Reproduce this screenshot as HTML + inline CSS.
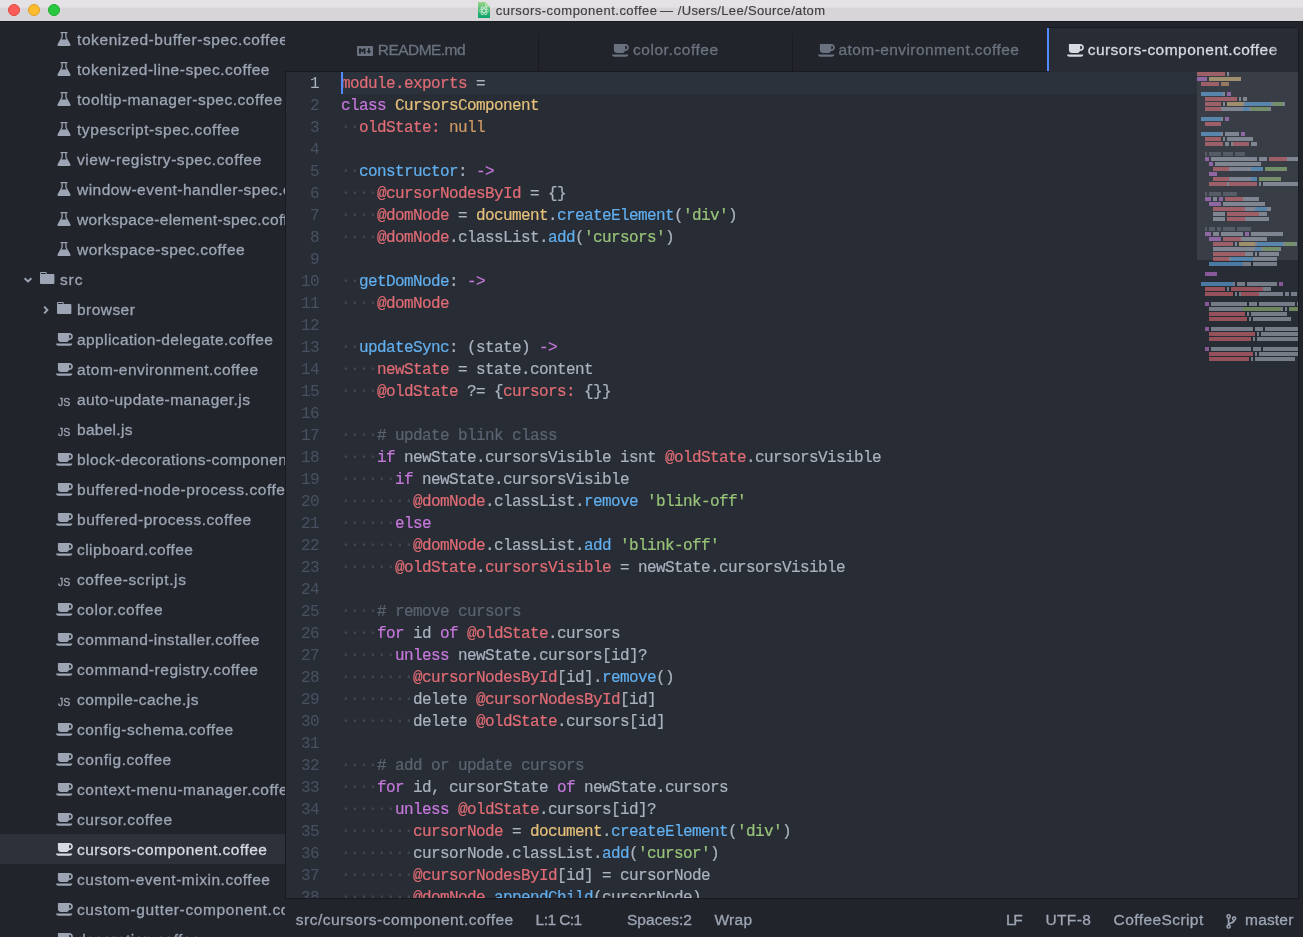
<!DOCTYPE html>
<html><head><meta charset="utf-8"><title>cursors-component.coffee</title>
<style>
*{box-sizing:border-box}
html,body{margin:0;padding:0}
html{width:1303px;height:937px;overflow:hidden}
.tree,.tabs,.ed,.sb,.title{will-change:transform}
body{width:1303px;height:937px;overflow:hidden;background:#21252b;position:relative;font-family:"Liberation Sans",sans-serif;color:#9da5b4;font-size:15.5px;letter-spacing:.48px;-webkit-text-stroke:.3px}
.title{position:absolute;left:0;top:0;width:1303px;height:21px;background:linear-gradient(#e4e2e4 0,#e4e2e4 7px,#d7d5d7 8.5px,#d7d5d7 100%)}
.tline{position:absolute;left:0;top:21px;width:1303px;height:1px;background:#181a1f}
.title .dot{position:absolute;top:4px;width:12px;height:12px;border-radius:50%}
.title .lb{position:absolute;top:0;height:21px;line-height:21px;color:#403e40;white-space:pre;-webkit-text-stroke:.15px}
.title .fi{position:absolute;left:478px;top:2px}
.tree{position:absolute;left:0;top:22px;width:285px;height:915px;overflow:hidden}
.row{position:absolute;left:0;width:285px;height:30px;line-height:32px;white-space:pre;margin-top:-22px}
.row.sel{background:#2c313a;color:#d7dae0}
.ic{position:absolute;fill:currentColor;overflow:visible}
.nm{position:absolute;top:0}
.js{-webkit-text-stroke:.3px;position:absolute;font-size:10.5px;letter-spacing:0;line-height:30px;transform:translateY(3px)}
.tabs{z-index:2;position:absolute;left:286px;top:28px;width:1012px;height:44px;border-bottom:1px solid #181a1f}
.tab{position:absolute;top:0;height:43px;width:253px;line-height:43px;white-space:pre;color:#6b727f}
.tab .sep{position:absolute;left:0;top:0;width:1px;height:43px;background:linear-gradient(rgba(24,26,31,0),#181a1f 14px)}
.tab.act{background:#282c34;color:#d7dae0;height:44px;border-left:2px solid #282c34;border-top-right-radius:3px;box-shadow:0 -1px 0 #181a1f, 1px 0 0 #181a1f}
.tab .lb{position:absolute;top:0}
.tab.act:before{content:'';position:absolute;left:-2px;top:0;width:2px;height:43px;background:#528bff}
.ed{position:absolute;left:286px;top:72px;width:1012px;height:826px;background:#282c34;overflow:hidden;box-shadow:0 0 0 1px #181a1f;font-family:"Liberation Mono",monospace;font-size:16px;letter-spacing:-0.6016px;-webkit-text-stroke:.2px;color:#abb2bf}
.ln{height:22px;line-height:24px;white-space:pre;position:relative}
.ln.cur:before{content:"";position:absolute;left:55px;right:101px;top:0;height:22px;background:#2c323c}
.no{position:absolute;left:0;width:33px;text-align:right;color:#495062;-webkit-text-stroke:0}
.cur .no{color:#abb2bf}
.tx{position:absolute;left:55px}
.tx i{font-style:normal;font-weight:bold;color:#40454f;position:relative;top:-1px;-webkit-text-stroke:0}
.tx b{font-weight:normal}
.v{color:#e06c75}.k{color:#c678dd}.c{color:#e5c07b}.n{color:#d19a66}.f{color:#61afef}.s{color:#98c379}.m{color:#5c6370}
.caret{position:absolute;left:55px;top:0;width:2px;height:22px;background:#528bff}
.mmv{position:absolute;left:911px;top:0;width:101px;height:188px;background:rgba(235,240,255,.09)}
.mm{position:absolute;left:911px;top:0;opacity:.6}
.sb{overflow:hidden;position:absolute;left:286px;top:899px;width:1017px;height:38px;line-height:42px;white-space:pre}
.sb .lb{position:absolute;top:0}
.fade{position:absolute;right:0;top:0;width:28px;height:43px;background:linear-gradient(90deg,rgba(40,44,52,0),#282c34 70%)}
</style></head>
<body>
<div class="tree">
<div class="row" style="top:24px"><svg class="ic" style="left:57px;top:8px" width="14" height="14" viewBox="0 0 14 14"><path fill-rule="evenodd" d="M3.6 0h6.8v1.3H9.5v3.9l3.9 7c.5.9-.1 1.8-1.100 1.800H1.700c-1 0-1.600-.9-1.100-1.800l3.900-7V1.300H3.600zM5.700 1.300v4.200L4.500 7.600h5L8.300 5.500V1.300z"/></svg><span class="nm" style="left:77px;letter-spacing:0.584px">tokenized-buffer-spec.coffee</span></div>
<div class="row" style="top:54px"><svg class="ic" style="left:57px;top:8px" width="14" height="14" viewBox="0 0 14 14"><path fill-rule="evenodd" d="M3.6 0h6.8v1.3H9.5v3.9l3.9 7c.5.9-.1 1.8-1.100 1.800H1.700c-1 0-1.600-.9-1.100-1.800l3.900-7V1.300H3.600zM5.700 1.300v4.200L4.500 7.600h5L8.300 5.500V1.300z"/></svg><span class="nm" style="left:77px;letter-spacing:0.508px">tokenized-line-spec.coffee</span></div>
<div class="row" style="top:84px"><svg class="ic" style="left:57px;top:8px" width="14" height="14" viewBox="0 0 14 14"><path fill-rule="evenodd" d="M3.6 0h6.8v1.3H9.5v3.9l3.9 7c.5.9-.1 1.8-1.100 1.800H1.700c-1 0-1.600-.9-1.100-1.800l3.900-7V1.300H3.600zM5.700 1.300v4.200L4.500 7.600h5L8.300 5.500V1.300z"/></svg><span class="nm" style="left:77px;letter-spacing:0.506px">tooltip-manager-spec.coffee</span></div>
<div class="row" style="top:114px"><svg class="ic" style="left:57px;top:8px" width="14" height="14" viewBox="0 0 14 14"><path fill-rule="evenodd" d="M3.6 0h6.8v1.3H9.5v3.9l3.9 7c.5.9-.1 1.8-1.100 1.800H1.700c-1 0-1.600-.9-1.100-1.800l3.900-7V1.300H3.600zM5.700 1.300v4.200L4.500 7.600h5L8.300 5.500V1.300z"/></svg><span class="nm" style="left:77px;letter-spacing:0.567px">typescript-spec.coffee</span></div>
<div class="row" style="top:144px"><svg class="ic" style="left:57px;top:8px" width="14" height="14" viewBox="0 0 14 14"><path fill-rule="evenodd" d="M3.6 0h6.8v1.3H9.5v3.9l3.9 7c.5.9-.1 1.8-1.100 1.800H1.700c-1 0-1.600-.9-1.100-1.800l3.900-7V1.300H3.600zM5.700 1.300v4.200L4.500 7.600h5L8.300 5.500V1.300z"/></svg><span class="nm" style="left:77px;letter-spacing:0.552px">view-registry-spec.coffee</span></div>
<div class="row" style="top:174px"><svg class="ic" style="left:57px;top:8px" width="14" height="14" viewBox="0 0 14 14"><path fill-rule="evenodd" d="M3.6 0h6.8v1.3H9.5v3.9l3.9 7c.5.9-.1 1.8-1.100 1.800H1.700c-1 0-1.600-.9-1.100-1.800l3.900-7V1.300H3.600zM5.700 1.300v4.200L4.500 7.600h5L8.300 5.500V1.300z"/></svg><span class="nm" style="left:77px;letter-spacing:0.466px">window-event-handler-spec.coffee</span></div>
<div class="row" style="top:204px"><svg class="ic" style="left:57px;top:8px" width="14" height="14" viewBox="0 0 14 14"><path fill-rule="evenodd" d="M3.6 0h6.8v1.3H9.5v3.9l3.9 7c.5.9-.1 1.8-1.100 1.800H1.700c-1 0-1.600-.9-1.100-1.800l3.900-7V1.300H3.600zM5.700 1.300v4.200L4.500 7.600h5L8.300 5.500V1.300z"/></svg><span class="nm" style="left:77px;letter-spacing:0.359px">workspace-element-spec.coffee</span></div>
<div class="row" style="top:234px"><svg class="ic" style="left:57px;top:8px" width="14" height="14" viewBox="0 0 14 14"><path fill-rule="evenodd" d="M3.6 0h6.8v1.3H9.5v3.9l3.9 7c.5.9-.1 1.8-1.100 1.800H1.700c-1 0-1.600-.9-1.100-1.800l3.900-7V1.300H3.600zM5.700 1.300v4.200L4.500 7.600h5L8.300 5.500V1.300z"/></svg><span class="nm" style="left:77px;letter-spacing:0.468px">workspace-spec.coffee</span></div>
<div class="row" style="top:264px"><svg class="ic" style="left:24px;top:13px" width="8" height="6" viewBox="0 0 8 6"><path d="M.6 1.2L4 4.4l3.4-3.2" fill="none" stroke="currentColor" stroke-width="1.9"/></svg><svg class="ic" style="left:39.7px;top:8px" width="14.4" height="12" viewBox="0 0 15 12" preserveAspectRatio="none"><path fill-rule="evenodd" d="M0 .9C0 .4.4 0 .9 0h5.2c.5 0 .9.4.9.9V2h7.1c.5 0 .9.4.9.9v8.2c0 .5-.4.9-.9.9H.9c-.5 0-.9-.4-.9-.9zM1 1v1h5V1z"/></svg><span class="nm" style="left:60px;letter-spacing:0.869px">src</span></div>
<div class="row" style="top:294px"><svg class="ic" style="left:43px;top:12px" width="6" height="8" viewBox="0 0 6 8"><path d="M1.2.6L4.4 4 1.2 7.4" fill="none" stroke="currentColor" stroke-width="1.9"/></svg><svg class="ic" style="left:57px;top:8px" width="14.4" height="12" viewBox="0 0 15 12" preserveAspectRatio="none"><path fill-rule="evenodd" d="M0 .9C0 .4.4 0 .9 0h5.2c.5 0 .9.4.9.9V2h7.1c.5 0 .9.4.9.9v8.2c0 .5-.4.9-.9.9H.9c-.5 0-.9-.4-.9-.9zM1 1v1h5V1z"/></svg><span class="nm" style="left:77px;letter-spacing:0.445px">browser</span></div>
<div class="row" style="top:324px"><svg class="ic" style="left:55.9px;top:9.4px" width="17" height="12.7" viewBox="0 0 17 12.7"><path fill-rule="evenodd" d="M1.900 0h11.300c2.100 0 3.700 1.500 3.700 3.500s-1.600 3.500-3.700 3.500h-.2c-.4 1.300-1.600 2.100-3 2.100H5c-1.700 0-3.100-1.400-3.100-3.100zM13.200 1.700v3.600c1.100 0 2-.8 2-1.800s-.9-1.800-2-1.800zM0 10.400h16.300c-.1 1.300-1.200 2.300-2.500 2.300H2.500C1.200 12.700.100 11.700 0 10.400z"/></svg><span class="nm" style="left:77px;letter-spacing:0.415px">application-delegate.coffee</span></div>
<div class="row" style="top:354px"><svg class="ic" style="left:55.9px;top:9.4px" width="17" height="12.7" viewBox="0 0 17 12.7"><path fill-rule="evenodd" d="M1.900 0h11.300c2.100 0 3.700 1.500 3.700 3.500s-1.600 3.500-3.700 3.500h-.2c-.4 1.300-1.600 2.100-3 2.100H5c-1.700 0-3.100-1.400-3.100-3.100zM13.200 1.700v3.600c1.100 0 2-.8 2-1.800s-.9-1.800-2-1.800zM0 10.400h16.300c-.1 1.300-1.200 2.300-2.500 2.300H2.500C1.200 12.700.100 11.700 0 10.400z"/></svg><span class="nm" style="left:77px;letter-spacing:0.447px">atom-environment.coffee</span></div>
<div class="row" style="top:384px"><span class="js" style="left:58px;top:0px">JS</span><span class="nm" style="left:77px;letter-spacing:0.437px">auto-update-manager.js</span></div>
<div class="row" style="top:414px"><span class="js" style="left:58px;top:0px">JS</span><span class="nm" style="left:77px;letter-spacing:0.282px">babel.js</span></div>
<div class="row" style="top:444px"><svg class="ic" style="left:55.9px;top:9.4px" width="17" height="12.7" viewBox="0 0 17 12.7"><path fill-rule="evenodd" d="M1.900 0h11.300c2.100 0 3.700 1.500 3.700 3.500s-1.600 3.500-3.700 3.500h-.2c-.4 1.300-1.600 2.100-3 2.100H5c-1.700 0-3.100-1.400-3.100-3.100zM13.200 1.700v3.600c1.100 0 2-.8 2-1.800s-.9-1.800-2-1.800zM0 10.400h16.300c-.1 1.300-1.200 2.300-2.500 2.300H2.500C1.200 12.700.100 11.700 0 10.400z"/></svg><span class="nm" style="left:77px;letter-spacing:0.437px">block-decorations-component.coffee</span></div>
<div class="row" style="top:474px"><svg class="ic" style="left:55.9px;top:9.4px" width="17" height="12.7" viewBox="0 0 17 12.7"><path fill-rule="evenodd" d="M1.900 0h11.300c2.100 0 3.700 1.500 3.700 3.500s-1.600 3.500-3.700 3.500h-.2c-.4 1.300-1.600 2.100-3 2.100H5c-1.700 0-3.100-1.400-3.100-3.100zM13.200 1.700v3.600c1.100 0 2-.8 2-1.800s-.9-1.800-2-1.800zM0 10.400h16.300c-.1 1.300-1.200 2.300-2.500 2.300H2.500C1.200 12.700.100 11.700 0 10.400z"/></svg><span class="nm" style="left:77px;letter-spacing:0.565px">buffered-node-process.coffee</span></div>
<div class="row" style="top:504px"><svg class="ic" style="left:55.9px;top:9.4px" width="17" height="12.7" viewBox="0 0 17 12.7"><path fill-rule="evenodd" d="M1.900 0h11.300c2.100 0 3.700 1.500 3.700 3.500s-1.600 3.500-3.700 3.500h-.2c-.4 1.300-1.600 2.100-3 2.100H5c-1.700 0-3.100-1.400-3.100-3.100zM13.200 1.700v3.600c1.100 0 2-.8 2-1.800s-.9-1.800-2-1.800zM0 10.400h16.300c-.1 1.300-1.200 2.300-2.500 2.300H2.500C1.200 12.700.100 11.700 0 10.400z"/></svg><span class="nm" style="left:77px;letter-spacing:0.542px">buffered-process.coffee</span></div>
<div class="row" style="top:534px"><svg class="ic" style="left:55.9px;top:9.4px" width="17" height="12.7" viewBox="0 0 17 12.7"><path fill-rule="evenodd" d="M1.900 0h11.300c2.100 0 3.700 1.500 3.700 3.500s-1.600 3.500-3.700 3.500h-.2c-.4 1.300-1.600 2.100-3 2.100H5c-1.700 0-3.100-1.400-3.100-3.100zM13.200 1.700v3.600c1.100 0 2-.8 2-1.800s-.9-1.800-2-1.800zM0 10.400h16.300c-.1 1.300-1.200 2.300-2.500 2.300H2.500C1.200 12.700.100 11.700 0 10.400z"/></svg><span class="nm" style="left:77px;letter-spacing:0.456px">clipboard.coffee</span></div>
<div class="row" style="top:564px"><span class="js" style="left:58px;top:0px">JS</span><span class="nm" style="left:77px;letter-spacing:0.617px">coffee-script.js</span></div>
<div class="row" style="top:594px"><svg class="ic" style="left:55.9px;top:9.4px" width="17" height="12.7" viewBox="0 0 17 12.7"><path fill-rule="evenodd" d="M1.900 0h11.300c2.100 0 3.700 1.500 3.700 3.500s-1.600 3.500-3.700 3.500h-.2c-.4 1.300-1.600 2.100-3 2.100H5c-1.700 0-3.100-1.400-3.100-3.100zM13.200 1.700v3.600c1.100 0 2-.8 2-1.800s-.9-1.800-2-1.800zM0 10.400h16.300c-.1 1.300-1.200 2.300-2.500 2.300H2.500C1.200 12.700.100 11.700 0 10.400z"/></svg><span class="nm" style="left:77px;letter-spacing:0.601px">color.coffee</span></div>
<div class="row" style="top:624px"><svg class="ic" style="left:55.9px;top:9.4px" width="17" height="12.7" viewBox="0 0 17 12.7"><path fill-rule="evenodd" d="M1.900 0h11.300c2.100 0 3.700 1.500 3.700 3.500s-1.600 3.500-3.700 3.500h-.2c-.4 1.300-1.600 2.100-3 2.100H5c-1.700 0-3.100-1.400-3.100-3.100zM13.200 1.700v3.600c1.100 0 2-.8 2-1.800s-.9-1.800-2-1.800zM0 10.400h16.300c-.1 1.300-1.200 2.300-2.500 2.300H2.500C1.200 12.700.100 11.700 0 10.400z"/></svg><span class="nm" style="left:77px;letter-spacing:0.451px">command-installer.coffee</span></div>
<div class="row" style="top:654px"><svg class="ic" style="left:55.9px;top:9.4px" width="17" height="12.7" viewBox="0 0 17 12.7"><path fill-rule="evenodd" d="M1.900 0h11.300c2.100 0 3.700 1.500 3.700 3.500s-1.600 3.500-3.700 3.500h-.2c-.4 1.300-1.600 2.100-3 2.100H5c-1.700 0-3.100-1.400-3.100-3.100zM13.200 1.700v3.600c1.100 0 2-.8 2-1.800s-.9-1.800-2-1.800zM0 10.400h16.300c-.1 1.300-1.200 2.300-2.500 2.300H2.500C1.200 12.700.100 11.700 0 10.400z"/></svg><span class="nm" style="left:77px;letter-spacing:0.539px">command-registry.coffee</span></div>
<div class="row" style="top:684px"><span class="js" style="left:58px;top:0px">JS</span><span class="nm" style="left:77px;letter-spacing:0.398px">compile-cache.js</span></div>
<div class="row" style="top:714px"><svg class="ic" style="left:55.9px;top:9.4px" width="17" height="12.7" viewBox="0 0 17 12.7"><path fill-rule="evenodd" d="M1.900 0h11.300c2.100 0 3.700 1.500 3.700 3.500s-1.600 3.500-3.700 3.500h-.2c-.4 1.300-1.600 2.100-3 2.100H5c-1.700 0-3.100-1.400-3.100-3.100zM13.200 1.700v3.600c1.100 0 2-.8 2-1.800s-.9-1.800-2-1.800zM0 10.400h16.300c-.1 1.300-1.200 2.300-2.500 2.300H2.500C1.200 12.700.100 11.700 0 10.400z"/></svg><span class="nm" style="left:77px;letter-spacing:0.482px">config-schema.coffee</span></div>
<div class="row" style="top:744px"><svg class="ic" style="left:55.9px;top:9.4px" width="17" height="12.7" viewBox="0 0 17 12.7"><path fill-rule="evenodd" d="M1.900 0h11.300c2.100 0 3.700 1.500 3.700 3.500s-1.600 3.500-3.700 3.500h-.2c-.4 1.300-1.600 2.100-3 2.100H5c-1.700 0-3.100-1.400-3.100-3.100zM13.200 1.700v3.600c1.100 0 2-.8 2-1.800s-.9-1.800-2-1.800zM0 10.400h16.300c-.1 1.300-1.200 2.300-2.500 2.300H2.500C1.200 12.700.100 11.700 0 10.400z"/></svg><span class="nm" style="left:77px;letter-spacing:0.549px">config.coffee</span></div>
<div class="row" style="top:774px"><svg class="ic" style="left:55.9px;top:9.4px" width="17" height="12.7" viewBox="0 0 17 12.7"><path fill-rule="evenodd" d="M1.900 0h11.300c2.100 0 3.700 1.500 3.700 3.500s-1.600 3.500-3.700 3.500h-.2c-.4 1.300-1.600 2.100-3 2.100H5c-1.700 0-3.100-1.400-3.100-3.100zM13.200 1.700v3.600c1.100 0 2-.8 2-1.800s-.9-1.800-2-1.800zM0 10.400h16.300c-.1 1.300-1.200 2.300-2.500 2.300H2.500C1.200 12.700.100 11.700 0 10.400z"/></svg><span class="nm" style="left:77px;letter-spacing:0.541px">context-menu-manager.coffee</span></div>
<div class="row" style="top:804px"><svg class="ic" style="left:55.9px;top:9.4px" width="17" height="12.7" viewBox="0 0 17 12.7"><path fill-rule="evenodd" d="M1.900 0h11.300c2.100 0 3.700 1.500 3.700 3.500s-1.600 3.500-3.700 3.500h-.2c-.4 1.300-1.600 2.100-3 2.100H5c-1.700 0-3.100-1.400-3.100-3.100zM13.200 1.700v3.600c1.100 0 2-.8 2-1.800s-.9-1.800-2-1.800zM0 10.400h16.300c-.1 1.300-1.200 2.300-2.500 2.300H2.500C1.200 12.700.100 11.700 0 10.400z"/></svg><span class="nm" style="left:77px;letter-spacing:0.545px">cursor.coffee</span></div>
<div class="row sel" style="top:834px"><svg class="ic" style="left:55.9px;top:9.4px" width="17" height="12.7" viewBox="0 0 17 12.7"><path fill-rule="evenodd" d="M1.900 0h11.300c2.100 0 3.700 1.500 3.700 3.500s-1.600 3.500-3.700 3.500h-.2c-.4 1.300-1.600 2.100-3 2.100H5c-1.700 0-3.100-1.400-3.100-3.100zM13.200 1.700v3.600c1.100 0 2-.8 2-1.800s-.9-1.800-2-1.800zM0 10.400h16.300c-.1 1.300-1.200 2.300-2.500 2.300H2.500C1.200 12.700.100 11.700 0 10.400z"/></svg><span class="nm" style="left:77px;letter-spacing:0.477px">cursors-component.coffee</span></div>
<div class="row" style="top:864px"><svg class="ic" style="left:55.9px;top:9.4px" width="17" height="12.7" viewBox="0 0 17 12.7"><path fill-rule="evenodd" d="M1.900 0h11.300c2.100 0 3.700 1.500 3.700 3.500s-1.600 3.500-3.700 3.500h-.2c-.4 1.300-1.600 2.100-3 2.100H5c-1.700 0-3.100-1.400-3.100-3.100zM13.200 1.700v3.600c1.100 0 2-.8 2-1.800s-.9-1.800-2-1.800zM0 10.400h16.300c-.1 1.300-1.200 2.300-2.500 2.300H2.500C1.200 12.700.100 11.700 0 10.400z"/></svg><span class="nm" style="left:77px;letter-spacing:0.512px">custom-event-mixin.coffee</span></div>
<div class="row" style="top:894px"><svg class="ic" style="left:55.9px;top:9.4px" width="17" height="12.7" viewBox="0 0 17 12.7"><path fill-rule="evenodd" d="M1.900 0h11.300c2.100 0 3.700 1.500 3.700 3.500s-1.600 3.500-3.700 3.500h-.2c-.4 1.300-1.600 2.100-3 2.100H5c-1.700 0-3.100-1.400-3.100-3.100zM13.200 1.700v3.600c1.100 0 2-.8 2-1.800s-.9-1.800-2-1.800zM0 10.400h16.300c-.1 1.300-1.200 2.300-2.500 2.300H2.500C1.200 12.700.100 11.700 0 10.400z"/></svg><span class="nm" style="left:77px;letter-spacing:0.605px">custom-gutter-component.coffee</span></div>
<div class="row" style="top:924px"><svg class="ic" style="left:55.9px;top:9.4px" width="17" height="12.7" viewBox="0 0 17 12.7"><path fill-rule="evenodd" d="M1.900 0h11.300c2.100 0 3.700 1.500 3.700 3.500s-1.600 3.500-3.700 3.500h-.2c-.4 1.300-1.600 2.100-3 2.100H5c-1.700 0-3.100-1.400-3.100-3.100zM13.200 1.700v3.600c1.100 0 2-.8 2-1.800s-.9-1.800-2-1.800zM0 10.400h16.300c-.1 1.300-1.200 2.300-2.500 2.300H2.500C1.200 12.700.100 11.700 0 10.400z"/></svg><span class="nm" style="left:77px;letter-spacing:0.285px">decoration.coffee</span></div>
</div>
<div class="tabs">
<div class="tab" style="left:0;width:252px"><svg class="ic" style="left:71px;top:18px" width="16" height="10" viewBox="0 0 14 9" preserveAspectRatio="none"><path fill-rule="evenodd" d="M1 0h12c.6 0 1 .4 1 1v7c0 .6-.4 1-1 1H1c-.6 0-1-.4-1-1V1c0-.6.4-1 1-1zM1.8 7h1.6V4.2L4.6 5.8 5.8 4.2V7h1.6V2H5.8L4.6 3.6 3.4 2H1.8zM10.4 7l2.2-2.6h-1.4V2H9.6v2.4H8.2z"/></svg><span class="lb" style="left:91.8px;letter-spacing:-0.544px">README.md</span></div>
<div class="tab" style="left:252px;width:254px"><i class="sep"></i><svg class="ic" style="left:74px;top:16.4px" width="17" height="12.7" viewBox="0 0 17 12.7"><path fill-rule="evenodd" d="M1.900 0h11.300c2.100 0 3.700 1.500 3.700 3.500s-1.600 3.500-3.700 3.500h-.2c-.4 1.300-1.600 2.100-3 2.100H5c-1.700 0-3.100-1.400-3.100-3.100zM13.200 1.700v3.600c1.100 0 2-.8 2-1.800s-.9-1.800-2-1.800zM0 10.400h16.300c-.1 1.300-1.200 2.300-2.500 2.300H2.500C1.200 12.700.100 11.700 0 10.400z"/></svg><span class="lb" style="left:94.9px;letter-spacing:0.573px">color.coffee</span></div>
<div class="tab" style="left:506px;width:255px"><i class="sep"></i><svg class="ic" style="left:26px;top:16.4px" width="17" height="12.7" viewBox="0 0 17 12.7"><path fill-rule="evenodd" d="M1.900 0h11.300c2.100 0 3.700 1.500 3.700 3.500s-1.600 3.500-3.700 3.500h-.2c-.4 1.300-1.600 2.100-3 2.100H5c-1.700 0-3.100-1.400-3.100-3.100zM13.200 1.700v3.600c1.100 0 2-.8 2-1.800s-.9-1.800-2-1.800zM0 10.400h16.300c-.1 1.300-1.200 2.300-2.500 2.300H2.500C1.200 12.700.100 11.700 0 10.400z"/></svg><span class="lb" style="left:46.5px;letter-spacing:0.42px">atom-environment.coffee</span></div>
<div class="tab act" style="left:761px;width:251px"><svg class="ic" style="left:18px;top:16.4px" width="17" height="12.7" viewBox="0 0 17 12.7"><path fill-rule="evenodd" d="M1.900 0h11.300c2.100 0 3.700 1.500 3.700 3.500s-1.600 3.500-3.700 3.500h-.2c-.4 1.300-1.600 2.100-3 2.100H5c-1.700 0-3.100-1.400-3.100-3.100zM13.200 1.700v3.600c1.100 0 2-.8 2-1.800s-.9-1.800-2-1.800zM0 10.400h16.300c-.1 1.300-1.200 2.300-2.500 2.300H2.500C1.200 12.700.100 11.700 0 10.400z"/></svg><span class="lb" style="left:38.7px;letter-spacing:0.464px">cursors-component.coffee</span><i class="fade"></i></div>
</div>
<div class="ed">
<div class="ln cur"><span class="no">1</span><span class="tx"><b class="v">module.exports</b> =</span></div>
<div class="ln"><span class="no">2</span><span class="tx"><b class="k">class</b> <b class="c">CursorsComponent</b></span></div>
<div class="ln"><span class="no">3</span><span class="tx"><i>··</i><b class="v">oldState:</b> <b class="n">null</b></span></div>
<div class="ln"><span class="no">4</span><span class="tx"></span></div>
<div class="ln"><span class="no">5</span><span class="tx"><i>··</i><b class="f">constructor</b>: <b class="k">-&gt;</b></span></div>
<div class="ln"><span class="no">6</span><span class="tx"><i>····</i><b class="v">@cursorNodesById</b> = {}</span></div>
<div class="ln"><span class="no">7</span><span class="tx"><i>····</i><b class="v">@domNode</b> = <b class="c">document</b>.<b class="f">createElement</b>(<b class="s">'div'</b>)</span></div>
<div class="ln"><span class="no">8</span><span class="tx"><i>····</i><b class="v">@domNode</b>.classList.<b class="f">add</b>(<b class="s">'cursors'</b>)</span></div>
<div class="ln"><span class="no">9</span><span class="tx"></span></div>
<div class="ln"><span class="no">10</span><span class="tx"><i>··</i><b class="f">getDomNode</b>: <b class="k">-&gt;</b></span></div>
<div class="ln"><span class="no">11</span><span class="tx"><i>····</i><b class="v">@domNode</b></span></div>
<div class="ln"><span class="no">12</span><span class="tx"></span></div>
<div class="ln"><span class="no">13</span><span class="tx"><i>··</i><b class="f">updateSync</b>: (state) <b class="k">-&gt;</b></span></div>
<div class="ln"><span class="no">14</span><span class="tx"><i>····</i><b class="v">newState</b> = state.content</span></div>
<div class="ln"><span class="no">15</span><span class="tx"><i>····</i><b class="v">@oldState</b> ?= {<b class="v">cursors:</b> {}}</span></div>
<div class="ln"><span class="no">16</span><span class="tx"></span></div>
<div class="ln"><span class="no">17</span><span class="tx"><i>····</i><b class="m"># update blink class</b></span></div>
<div class="ln"><span class="no">18</span><span class="tx"><i>····</i><b class="k">if</b> newState.cursorsVisible isnt <b class="v">@oldState</b>.cursorsVisible</span></div>
<div class="ln"><span class="no">19</span><span class="tx"><i>······</i><b class="k">if</b> newState.cursorsVisible</span></div>
<div class="ln"><span class="no">20</span><span class="tx"><i>········</i><b class="v">@domNode</b>.classList.<b class="f">remove</b> <b class="s">'blink-off'</b></span></div>
<div class="ln"><span class="no">21</span><span class="tx"><i>······</i><b class="k">else</b></span></div>
<div class="ln"><span class="no">22</span><span class="tx"><i>········</i><b class="v">@domNode</b>.classList.<b class="f">add</b> <b class="s">'blink-off'</b></span></div>
<div class="ln"><span class="no">23</span><span class="tx"><i>······</i><b class="v">@oldState</b>.<b class="v">cursorsVisible</b> = newState.cursorsVisible</span></div>
<div class="ln"><span class="no">24</span><span class="tx"></span></div>
<div class="ln"><span class="no">25</span><span class="tx"><i>····</i><b class="m"># remove cursors</b></span></div>
<div class="ln"><span class="no">26</span><span class="tx"><i>····</i><b class="k">for</b> id <b class="k">of</b> <b class="v">@oldState</b>.cursors</span></div>
<div class="ln"><span class="no">27</span><span class="tx"><i>······</i><b class="k">unless</b> newState.cursors[id]?</span></div>
<div class="ln"><span class="no">28</span><span class="tx"><i>········</i><b class="v">@cursorNodesById</b>[id].<b class="f">remove</b>()</span></div>
<div class="ln"><span class="no">29</span><span class="tx"><i>········</i>delete <b class="v">@cursorNodesById</b>[id]</span></div>
<div class="ln"><span class="no">30</span><span class="tx"><i>········</i>delete <b class="v">@oldState</b>.cursors[id]</span></div>
<div class="ln"><span class="no">31</span><span class="tx"></span></div>
<div class="ln"><span class="no">32</span><span class="tx"><i>····</i><b class="m"># add or update cursors</b></span></div>
<div class="ln"><span class="no">33</span><span class="tx"><i>····</i><b class="k">for</b> id, cursorState <b class="k">of</b> newState.cursors</span></div>
<div class="ln"><span class="no">34</span><span class="tx"><i>······</i><b class="k">unless</b> <b class="v">@oldState</b>.cursors[id]?</span></div>
<div class="ln"><span class="no">35</span><span class="tx"><i>········</i><b class="v">cursorNode</b> = <b class="c">document</b>.<b class="f">createElement</b>(<b class="s">'div'</b>)</span></div>
<div class="ln"><span class="no">36</span><span class="tx"><i>········</i>cursorNode.classList.<b class="f">add</b>(<b class="s">'cursor'</b>)</span></div>
<div class="ln"><span class="no">37</span><span class="tx"><i>········</i><b class="v">@cursorNodesById</b>[id] = cursorNode</span></div>
<div class="ln"><span class="no">38</span><span class="tx"><i>········</i><b class="v">@domNode</b>.<b class="f">appendChild</b>(cursorNode)</span></div>
<div class="caret"></div>
<svg class="mm" width="101" height="290" viewBox="0 0 101 290" shape-rendering="crispEdges"><rect x="0" y="0" width="28" height="4" fill="#e06c75"/><rect x="30" y="0" width="2" height="4" fill="#abb2bf"/><rect x="0" y="5" width="10" height="4" fill="#c678dd"/><rect x="12" y="5" width="32" height="4" fill="#e5c07b"/><rect x="4" y="10" width="18" height="4" fill="#e06c75"/><rect x="24" y="10" width="8" height="4" fill="#d19a66"/><rect x="4" y="20" width="22" height="4" fill="#61afef"/><rect x="26" y="20" width="2" height="4" fill="#abb2bf"/><rect x="30" y="20" width="4" height="4" fill="#c678dd"/><rect x="8" y="25" width="32" height="4" fill="#e06c75"/><rect x="42" y="25" width="2" height="4" fill="#abb2bf"/><rect x="46" y="25" width="4" height="4" fill="#abb2bf"/><rect x="8" y="30" width="16" height="4" fill="#e06c75"/><rect x="26" y="30" width="2" height="4" fill="#abb2bf"/><rect x="30" y="30" width="16" height="4" fill="#e5c07b"/><rect x="46" y="30" width="2" height="4" fill="#abb2bf"/><rect x="48" y="30" width="26" height="4" fill="#61afef"/><rect x="74" y="30" width="2" height="4" fill="#abb2bf"/><rect x="76" y="30" width="10" height="4" fill="#98c379"/><rect x="86" y="30" width="2" height="4" fill="#abb2bf"/><rect x="8" y="35" width="16" height="4" fill="#e06c75"/><rect x="24" y="35" width="22" height="4" fill="#abb2bf"/><rect x="46" y="35" width="6" height="4" fill="#61afef"/><rect x="52" y="35" width="2" height="4" fill="#abb2bf"/><rect x="54" y="35" width="18" height="4" fill="#98c379"/><rect x="72" y="35" width="2" height="4" fill="#abb2bf"/><rect x="4" y="45" width="20" height="4" fill="#61afef"/><rect x="24" y="45" width="2" height="4" fill="#abb2bf"/><rect x="28" y="45" width="4" height="4" fill="#c678dd"/><rect x="8" y="50" width="16" height="4" fill="#e06c75"/><rect x="4" y="60" width="20" height="4" fill="#61afef"/><rect x="24" y="60" width="2" height="4" fill="#abb2bf"/><rect x="28" y="60" width="14" height="4" fill="#abb2bf"/><rect x="44" y="60" width="4" height="4" fill="#c678dd"/><rect x="8" y="65" width="16" height="4" fill="#e06c75"/><rect x="26" y="65" width="2" height="4" fill="#abb2bf"/><rect x="30" y="65" width="26" height="4" fill="#abb2bf"/><rect x="8" y="70" width="18" height="4" fill="#e06c75"/><rect x="28" y="70" width="4" height="4" fill="#abb2bf"/><rect x="34" y="70" width="2" height="4" fill="#abb2bf"/><rect x="36" y="70" width="16" height="4" fill="#e06c75"/><rect x="54" y="70" width="6" height="4" fill="#abb2bf"/><rect x="8" y="80" width="2" height="4" fill="#5c6370"/><rect x="12" y="80" width="12" height="4" fill="#5c6370"/><rect x="26" y="80" width="10" height="4" fill="#5c6370"/><rect x="38" y="80" width="10" height="4" fill="#5c6370"/><rect x="8" y="85" width="4" height="4" fill="#c678dd"/><rect x="14" y="85" width="46" height="4" fill="#abb2bf"/><rect x="62" y="85" width="8" height="4" fill="#abb2bf"/><rect x="72" y="85" width="18" height="4" fill="#e06c75"/><rect x="90" y="85" width="11" height="4" fill="#abb2bf"/><rect x="12" y="90" width="4" height="4" fill="#c678dd"/><rect x="18" y="90" width="46" height="4" fill="#abb2bf"/><rect x="16" y="95" width="16" height="4" fill="#e06c75"/><rect x="32" y="95" width="22" height="4" fill="#abb2bf"/><rect x="54" y="95" width="12" height="4" fill="#61afef"/><rect x="68" y="95" width="22" height="4" fill="#98c379"/><rect x="12" y="100" width="8" height="4" fill="#c678dd"/><rect x="16" y="105" width="16" height="4" fill="#e06c75"/><rect x="32" y="105" width="22" height="4" fill="#abb2bf"/><rect x="54" y="105" width="6" height="4" fill="#61afef"/><rect x="62" y="105" width="22" height="4" fill="#98c379"/><rect x="12" y="110" width="18" height="4" fill="#e06c75"/><rect x="30" y="110" width="2" height="4" fill="#abb2bf"/><rect x="32" y="110" width="28" height="4" fill="#e06c75"/><rect x="62" y="110" width="2" height="4" fill="#abb2bf"/><rect x="66" y="110" width="35" height="4" fill="#abb2bf"/><rect x="8" y="120" width="2" height="4" fill="#5c6370"/><rect x="12" y="120" width="12" height="4" fill="#5c6370"/><rect x="26" y="120" width="14" height="4" fill="#5c6370"/><rect x="8" y="125" width="6" height="4" fill="#c678dd"/><rect x="16" y="125" width="4" height="4" fill="#abb2bf"/><rect x="22" y="125" width="4" height="4" fill="#c678dd"/><rect x="28" y="125" width="18" height="4" fill="#e06c75"/><rect x="46" y="125" width="16" height="4" fill="#abb2bf"/><rect x="12" y="130" width="12" height="4" fill="#c678dd"/><rect x="26" y="130" width="42" height="4" fill="#abb2bf"/><rect x="16" y="135" width="32" height="4" fill="#e06c75"/><rect x="48" y="135" width="10" height="4" fill="#abb2bf"/><rect x="58" y="135" width="12" height="4" fill="#61afef"/><rect x="70" y="135" width="4" height="4" fill="#abb2bf"/><rect x="16" y="140" width="12" height="4" fill="#abb2bf"/><rect x="30" y="140" width="32" height="4" fill="#e06c75"/><rect x="62" y="140" width="8" height="4" fill="#abb2bf"/><rect x="16" y="145" width="12" height="4" fill="#abb2bf"/><rect x="30" y="145" width="18" height="4" fill="#e06c75"/><rect x="48" y="145" width="24" height="4" fill="#abb2bf"/><rect x="8" y="155" width="2" height="4" fill="#5c6370"/><rect x="12" y="155" width="6" height="4" fill="#5c6370"/><rect x="20" y="155" width="4" height="4" fill="#5c6370"/><rect x="26" y="155" width="12" height="4" fill="#5c6370"/><rect x="40" y="155" width="14" height="4" fill="#5c6370"/><rect x="8" y="160" width="6" height="4" fill="#c678dd"/><rect x="16" y="160" width="6" height="4" fill="#abb2bf"/><rect x="24" y="160" width="22" height="4" fill="#abb2bf"/><rect x="48" y="160" width="4" height="4" fill="#c678dd"/><rect x="54" y="160" width="32" height="4" fill="#abb2bf"/><rect x="12" y="165" width="12" height="4" fill="#c678dd"/><rect x="26" y="165" width="18" height="4" fill="#e06c75"/><rect x="44" y="165" width="26" height="4" fill="#abb2bf"/><rect x="16" y="170" width="20" height="4" fill="#e06c75"/><rect x="38" y="170" width="2" height="4" fill="#abb2bf"/><rect x="42" y="170" width="16" height="4" fill="#e5c07b"/><rect x="58" y="170" width="2" height="4" fill="#abb2bf"/><rect x="60" y="170" width="26" height="4" fill="#61afef"/><rect x="86" y="170" width="2" height="4" fill="#abb2bf"/><rect x="88" y="170" width="10" height="4" fill="#98c379"/><rect x="98" y="170" width="2" height="4" fill="#abb2bf"/><rect x="16" y="175" width="42" height="4" fill="#abb2bf"/><rect x="58" y="175" width="6" height="4" fill="#61afef"/><rect x="64" y="175" width="2" height="4" fill="#abb2bf"/><rect x="66" y="175" width="16" height="4" fill="#98c379"/><rect x="82" y="175" width="2" height="4" fill="#abb2bf"/><rect x="16" y="180" width="32" height="4" fill="#e06c75"/><rect x="48" y="180" width="8" height="4" fill="#abb2bf"/><rect x="58" y="180" width="2" height="4" fill="#abb2bf"/><rect x="62" y="180" width="20" height="4" fill="#abb2bf"/><rect x="16" y="185" width="16" height="4" fill="#e06c75"/><rect x="32" y="185" width="2" height="4" fill="#abb2bf"/><rect x="34" y="185" width="22" height="4" fill="#61afef"/><rect x="56" y="185" width="24" height="4" fill="#abb2bf"/><rect x="12" y="190" width="34" height="4" fill="#61afef"/><rect x="46" y="190" width="8" height="4" fill="#abb2bf"/><rect x="56" y="190" width="24" height="4" fill="#abb2bf"/><rect x="8" y="200" width="12" height="4" fill="#c678dd"/><rect x="4" y="210" width="32" height="4" fill="#61afef"/><rect x="36" y="210" width="2" height="4" fill="#abb2bf"/><rect x="40" y="210" width="8" height="4" fill="#abb2bf"/><rect x="50" y="210" width="30" height="4" fill="#abb2bf"/><rect x="82" y="210" width="4" height="4" fill="#c678dd"/><rect x="8" y="215" width="20" height="4" fill="#e06c75"/><rect x="30" y="215" width="2" height="4" fill="#abb2bf"/><rect x="34" y="215" width="32" height="4" fill="#e06c75"/><rect x="66" y="215" width="8" height="4" fill="#abb2bf"/><rect x="8" y="220" width="28" height="4" fill="#e06c75"/><rect x="38" y="220" width="2" height="4" fill="#abb2bf"/><rect x="42" y="220" width="2" height="4" fill="#abb2bf"/><rect x="44" y="220" width="18" height="4" fill="#e06c75"/><rect x="62" y="220" width="24" height="4" fill="#abb2bf"/><rect x="88" y="220" width="4" height="4" fill="#abb2bf"/><rect x="94" y="220" width="6" height="4" fill="#abb2bf"/><rect x="8" y="230" width="4" height="4" fill="#c678dd"/><rect x="14" y="230" width="36" height="4" fill="#abb2bf"/><rect x="52" y="230" width="8" height="4" fill="#abb2bf"/><rect x="62" y="230" width="36" height="4" fill="#abb2bf"/><rect x="100" y="230" width="1" height="4" fill="#abb2bf"/><rect x="12" y="235" width="34" height="4" fill="#abb2bf"/><rect x="46" y="235" width="38" height="4" fill="#98c379"/><rect x="84" y="235" width="2" height="4" fill="#abb2bf"/><rect x="88" y="235" width="2" height="4" fill="#abb2bf"/><rect x="92" y="235" width="9" height="4" fill="#98c379"/><rect x="12" y="240" width="36" height="4" fill="#e06c75"/><rect x="50" y="240" width="2" height="4" fill="#abb2bf"/><rect x="54" y="240" width="36" height="4" fill="#abb2bf"/><rect x="12" y="245" width="38" height="4" fill="#e06c75"/><rect x="52" y="245" width="2" height="4" fill="#abb2bf"/><rect x="56" y="245" width="38" height="4" fill="#abb2bf"/><rect x="8" y="255" width="4" height="4" fill="#c678dd"/><rect x="14" y="255" width="42" height="4" fill="#abb2bf"/><rect x="58" y="255" width="8" height="4" fill="#abb2bf"/><rect x="68" y="255" width="33" height="4" fill="#abb2bf"/><rect x="12" y="260" width="46" height="4" fill="#e06c75"/><rect x="60" y="260" width="2" height="4" fill="#abb2bf"/><rect x="64" y="260" width="37" height="4" fill="#abb2bf"/><rect x="12" y="265" width="42" height="4" fill="#e06c75"/><rect x="56" y="265" width="2" height="4" fill="#abb2bf"/><rect x="60" y="265" width="41" height="4" fill="#abb2bf"/><rect x="8" y="275" width="4" height="4" fill="#c678dd"/><rect x="14" y="275" width="40" height="4" fill="#abb2bf"/><rect x="56" y="275" width="8" height="4" fill="#abb2bf"/><rect x="66" y="275" width="35" height="4" fill="#abb2bf"/><rect x="12" y="280" width="44" height="4" fill="#e06c75"/><rect x="58" y="280" width="2" height="4" fill="#abb2bf"/><rect x="62" y="280" width="39" height="4" fill="#abb2bf"/><rect x="12" y="285" width="40" height="4" fill="#e06c75"/><rect x="54" y="285" width="2" height="4" fill="#abb2bf"/><rect x="58" y="285" width="40" height="4" fill="#abb2bf"/></svg>
<div class="mmv"></div>
</div>
<div class="sb">
<span class="lb" style="left:9.8px;letter-spacing:0.5px">src/cursors-component.coffee</span>
<span class="lb" style="left:249.6px;letter-spacing:-0.562px">L:1 C:1</span>
<span class="lb" style="left:340.9px;letter-spacing:0.067px">Spaces:2</span>
<span class="lb" style="left:428.4px;letter-spacing:0.349px">Wrap</span>
<span class="lb" style="left:719.9px;letter-spacing:-1.289px">LF</span>
<span class="lb" style="left:759.4px;letter-spacing:0.397px">UTF-8</span>
<span class="lb" style="left:827.6px;letter-spacing:0.417px">CoffeeScript</span>
<svg class="ic" style="left:939.7px;top:14.7px" width="11" height="15" viewBox="0 0 11 15"><g fill="none" stroke="currentColor" stroke-width="1.5"><circle cx="2.6" cy="2.4" r="1.6"/><circle cx="2.6" cy="12.5" r="1.6"/><circle cx="8.1" cy="4.6" r="1.6"/><path d="M2.6 4v7M8.100 6.200c0 3.400-5.500 2.200-5.500 4.800" stroke-width="1.7"/></g></svg>
<span class="lb" style="left:959.1px;letter-spacing:0.166px">master</span>
</div>
<div class="tline"></div>
<div class="title">
<i class="dot" style="left:8px;background:#fc5b57;border:.5px solid #e2463f"></i>
<i class="dot" style="left:28px;background:#fdbc2e;border:.5px solid #e0a123"></i>
<i class="dot" style="left:48px;background:#28c941;border:.5px solid #1bac2c"></i>
<svg class="fi" width="12.2" height="16" viewBox="0 0 12.2 16"><defs><linearGradient id="g" x1="0" y1="0" x2="0" y2="1"><stop offset="0" stop-color="#9ad78c"/><stop offset=".5" stop-color="#4db874"/><stop offset="1" stop-color="#06a269"/></linearGradient></defs><path d="M0 .4c0-.2.200-.4.400-.4h6.600l5.200 5.200v10.400c0 .2-.2.400-.4.400H.4c-.2 0-.4-.2-.4-.4z" fill="url(#g)"/><path d="M7 0l5.200 5.200H8c-.6 0-1-.4-1-1z" fill="#b9e6b4" opacity=".75"/><g fill="none" stroke="#e9fbf0" stroke-width=".7" opacity=".85"><ellipse cx="6" cy="8.700" rx="4.600" ry="1.800"/><ellipse cx="6" cy="8.700" rx="4.600" ry="1.800" transform="rotate(60 6 8.700)"/><ellipse cx="6" cy="8.700" rx="4.600" ry="1.800" transform="rotate(120 6 8.700)"/></g></svg>
<span class="lb" style="left:495.8px;letter-spacing:0.484px;font-size:13px">cursors-component.coffee</span><span class="lb" style="left:660.1px;letter-spacing:0px;font-size:13px">—</span><span class="lb" style="left:677.8px;letter-spacing:0.334px;font-size:13px">/Users/Lee/Source/atom</span>
</div>
</body></html>
